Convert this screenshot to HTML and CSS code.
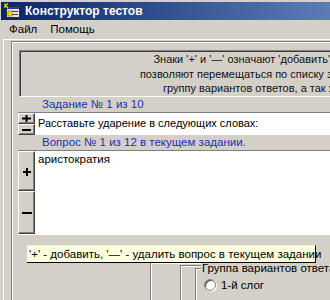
FILE: index.html
```html
<!DOCTYPE html>
<html lang="ru">
<head>
<meta charset="utf-8">
<title>Конструктор тестов</title>
<link rel="stylesheet" href="styles.css">
</head>
<body>
<div class="window">
  <div class="titlebar">
    <svg class="appicon" width="16" height="16" viewBox="0 0 16 16">
      <rect x="2.5" y="3.5" width="13" height="11" fill="#e8e4d8" stroke="#303030"/>
      <rect x="3" y="4" width="12" height="2" fill="#2040a0"/>
      <line x1="8" y1="8.5" x2="14" y2="8.5" stroke="#404040"/>
      <line x1="8" y1="11.5" x2="14" y2="11.5" stroke="#404040"/>
      <rect x="4" y="8" width="4" height="5" fill="#ffe000" stroke="#806000" stroke-width="0.6"/>
      <path d="M1 0.5 L1 5 M1 3 L4 0.5 M1.8 2.6 L4 5" stroke="#ffe000" stroke-width="1.2" fill="none"/>
    </svg>
    <span class="title">Конструктор тестов</span>
  </div>
  <div class="menubar">
    <span class="menu">Файл</span>
    <span class="menu">Помощь</span>
  </div>
  <div class="panel">
    <div class="frame">
      <div class="info">
        <p class="line">Знаки '+' и '—' означают 'добавить' и 'удалить', а стрелки</p>
        <p class="line">позволяют перемещаться по списку значений, выбирать одну</p>
        <p class="line">группу вариантов ответов, а так же, если надо, текст</p>
      </div>
      <div class="caption">Задание № 1 из 10</div>
      <div class="editrow">
        <div class="pm">
          <div class="btn small" title="+">
            <svg width="9" height="7" viewBox="0 0 9 7"><rect x="0" y="2.5" width="9" height="2"/><rect x="3.5" y="0" width="2" height="7"/></svg>
          </div>
          <div class="btn small" title="−">
            <svg width="9" height="2" viewBox="0 0 9 2"><rect x="0" y="0" width="9" height="2"/></svg>
          </div>
        </div>
        <div class="field">Расставьте ударение в следующих словах:</div>
      </div>
      <div class="caption">Вопрос № 1 из 12 в текущем задании.</div>
      <div class="qbox">
        <div class="btncol">
          <div class="btn big plus" title="+">
            <svg width="8" height="8" viewBox="0 0 8 8"><rect x="0" y="3" width="8" height="2"/><rect x="3" y="0" width="2" height="8"/></svg>
          </div>
          <div class="btn big minus" title="—">
            <svg width="10" height="2" viewBox="0 0 10 2"><rect x="0" y="0" width="10" height="2"/></svg>
          </div>
        </div>
        <div class="memo">аристократия</div>
      </div>
      <div class="bottom">
        <div class="etch1">
          <div class="etch2">
            <div class="group">
              <span class="legend">Группа вариантов ответа</span>
              <div class="radio"><span class="circle"></span><span>1-й слог</span></div>
            </div>
          </div>
        </div>
      </div>
    </div>
  </div>
  <div class="tooltip">'+' - добавить, '—' - удалить вопрос в текущем задании</div>
</div>
</body>
</html>
```

FILE: styles.css
```css
html, body {
  margin: 0;
  padding: 0;
  background: #d4d0c8;
}
.window {
  position: relative;
  width: 330px;
  height: 300px;
  overflow: hidden;
  background: #d4d0c8;
  font-family: "Liberation Sans", Arial, sans-serif;
  font-size: 11px;
  color: #000;
}
.titlebar {
  margin: 2px 0 0 1px;
  height: 18px;
  display: flex;
  align-items: center;
  background: linear-gradient(to right, #0a246a 0, #5a7db8 329px);
}
.appicon {
  margin-left: 3px;
  flex: none;
}
.title {
  margin-left: 5px;
  color: #fff;
  font-weight: bold;
  font-size: 12px;
  white-space: nowrap;
}
.menubar {
  height: 18px;
  display: flex;
  align-items: center;
  padding-left: 9px;
  gap: 13px;
  font-size: 11.5px;
}
.panel {
  margin: 1px 0 0 3px;
  border-top: 1px solid #fff;
  border-left: 1px solid #fff;
  height: 300px;
}
.frame {
  margin: 1px 0 0 7px;
  border-top: 1px solid #808080;
  border-left: 1px solid #808080;
  box-shadow: inset 1px 1px #fff;
  padding: 8px 0 0 7px;
  height: 300px;
}
.info {
  width: 556px;
  height: 44px;
  border: 1px solid;
  border-color: #808080 #fff #fff #808080;
  box-shadow: inset 1px 1px #404040;
  padding-top: 1px;
  text-align: center;
}
.line {
  margin: 0;
  line-height: 14.5px;
  white-space: nowrap;
  color: #101010;
}
.caption {
  padding-left: 23px;
  height: 14px;
  line-height: 14px;
  color: #2030b0;
  white-space: nowrap;
  font-size: 11.5px;
}
.editrow {
  margin-top: 1px;
  display: flex;
  height: 22px;
  margin-left: -1px;
  border-top: 1px solid #808080;
}
.pm {
  width: 17px;
  display: flex;
  flex-direction: column;
}
.btn {
  background: #d4d0c8;
  border: 1px solid;
  border-color: #fff #404040 #404040 #fff;
  box-shadow: inset -1px -1px #808080;
  display: flex;
  align-items: center;
  justify-content: center;
  box-sizing: border-box;
}
.btn svg {
  display: block;
  fill: #000;
}
.btn.small {
  height: 11px;
}
.field {
  flex: 1;
  background: #fff;
  padding-left: 3px;
  line-height: 21px;
  white-space: nowrap;
  font-size: 11px;
}
.qbox {
  margin-top: 1px;
  margin-left: -1px;
  display: flex;
  height: 83px;
  border-top: 1px solid #808080;
  border-bottom: 1px solid #fff;
}
.btncol {
  width: 17px;
  display: flex;
  flex-direction: column;
}
.btn.big.plus {
  height: 40px;
  padding-top: 2px;
}
.btn.big.minus {
  flex: 1;
}
.memo {
  flex: 1;
  background: #fff;
  padding: 2px 0 0 3px;
  white-space: nowrap;
  font-size: 11.5px;
}
.bottom {
  margin-top: 27px;
  padding-left: 131px;
}
.etch1 {
  border-top: 1px solid #808080;
  border-left: 1px solid #808080;
  box-shadow: inset 1px 1px #fff;
  padding: 2px 0 0 29px;
  height: 60px;
}
.etch2 {
  border-top: 1px solid #808080;
  border-left: 1px solid #808080;
  box-shadow: inset 1px 1px #fff;
  padding: 0 0 0 14px;
  height: 60px;
}
.group {
  position: relative;
  margin-top: 2px;
  border-top: 1px solid #808080;
  border-left: 1px solid #808080;
  box-shadow: inset 1px 1px #fff;
  height: 60px;
  padding: 10px 0 0 8px;
}
.legend {
  position: absolute;
  top: -7px;
  left: 5px;
  padding: 0 1px;
  background: #d4d0c8;
  white-space: nowrap;
  font-size: 11.5px;
}
.radio {
  display: flex;
  align-items: center;
  gap: 5px;
  white-space: nowrap;
  font-size: 11.5px;
}
.circle {
  width: 10px;
  height: 10px;
  border-radius: 50%;
  background: #fff;
  border: 1px solid #808080;
  box-shadow: inset 1px 1px #404040, 1px 1px #fff;
}
.tooltip {
  position: absolute;
  left: 27px;
  top: 245px;
  width: 286px;
  height: 16px;
  padding-left: 2px;
  background: #ffffe1;
  border-right: 1px solid #000;
  border-bottom: 1px solid #000;
  border-top: 1px solid #f0f0d0;
  line-height: 16px;
  white-space: nowrap;
  font-size: 11.5px;
}
```
